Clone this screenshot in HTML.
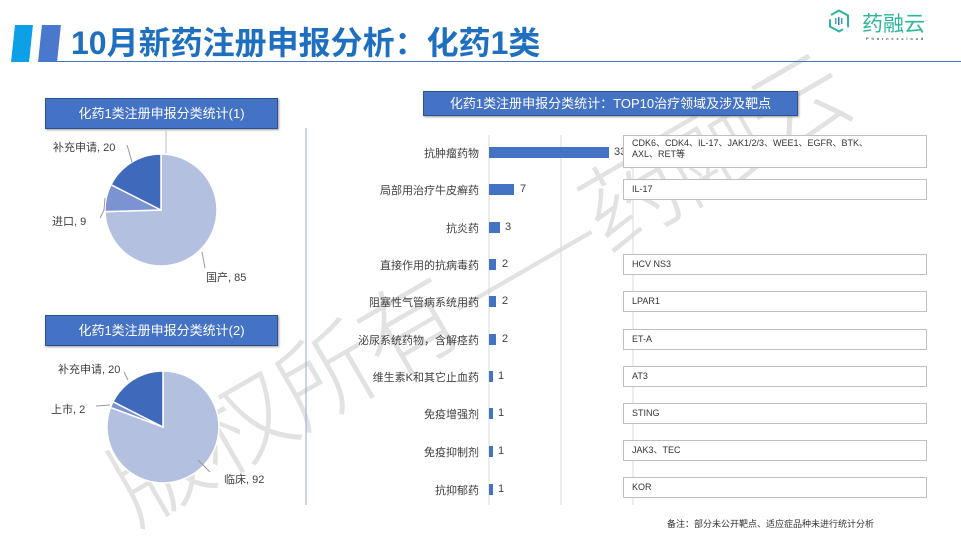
<!DOCTYPE html>
<html><head><meta charset="utf-8"><style>
*{margin:0;padding:0;box-sizing:border-box}
body{width:961px;height:538px;background:#fff;position:relative;overflow:hidden;font-family:"Liberation Sans","Noto Sans CJK SC",sans-serif;color:#404040}
.a{position:absolute}
.hdr{background:#4472c4;color:#fff;font-size:13px;text-align:center;border:1px solid #2f528f;box-shadow:1px 1px 2px #999}
.lbl{font-size:11px;color:#404040;white-space:nowrap}
.box{position:absolute;left:623px;width:304px;border:1px solid #bfbfbf;font-size:9px;padding:2px 8px;color:#333;line-height:11px;background:#fff}
.bar{position:absolute;left:489px;height:11px;background:#4472c4}
</style></head><body>
<div class="a" style="left:475px;top:282px;transform:translate(-50%,-50%) rotate(-30deg);font-size:98px;color:#e2e2e2;white-space:nowrap;font-family:'Noto Sans CJK SC',sans-serif;font-weight:300;letter-spacing:-2px">版权所有——药融云</div>
<div class="a" style="left:13px;top:25px;width:18px;height:37px;background:#0ea0e6;transform:skewX(-6deg)"></div>
<div class="a" style="left:40px;top:25px;width:19px;height:37px;background:#4a78cc;transform:skewX(-6deg)"></div>
<div class="a" style="left:71px;top:24px;font-size:32px;font-weight:bold;color:#1f6fc0;line-height:38px;white-space:nowrap">10月新药注册申报分析：化药1类</div>
<div class="a" style="left:56px;top:61px;width:905px;height:1px;background:#4472c4"></div>
<svg class="a" style="left:828px;top:9px" width="22" height="24" viewBox="0 0 22 24"><path d="M11 1.5 L20 6.5 L20 17.5 L11 22.5 L2 17.5 L2 6.5 Z" fill="none" stroke="#2bb59a" stroke-width="2" stroke-dasharray="22 5"/><rect x="7" y="9" width="1.5" height="6" fill="#2bb59a"/><rect x="10" y="8" width="1.5" height="8" fill="#4472c4"/><rect x="13" y="9" width="1.5" height="6" fill="#2bb59a"/></svg>
<div class="a" style="left:862px;top:11px;font-size:21px;color:#2bb59a;font-family:'Noto Sans CJK SC',sans-serif;line-height:25px">药融云</div>
<div class="a" style="left:866px;top:36px;font-size:4px;color:#555;letter-spacing:2.8px;font-weight:bold">Pharnexcloud</div>

<div class="a hdr" style="left:45px;top:98px;width:233px;height:31px;line-height:29px">化药1类注册申报分类统计(1)</div>
<div class="a hdr" style="left:45px;top:315px;width:233px;height:31px;line-height:29px">化药1类注册申报分类统计(2)</div>
<div class="a hdr" style="left:423px;top:91px;width:375px;height:25px;line-height:23px">化药1类注册申报分类统计：TOP10治疗领域及涉及靶点</div>

<svg class="a" style="left:0;top:0" width="961" height="538">
<line x1="166" y1="131" x2="166" y2="160" stroke="#bfbfbf"/>
<line x1="306" y1="128" x2="306" y2="505" stroke="#8faadc"/>
<line x1="489" y1="135" x2="489" y2="505" stroke="#d9d9d9"/>
<line x1="561" y1="135" x2="561" y2="505" stroke="#d9d9d9"/>
<line x1="633" y1="135" x2="633" y2="505" stroke="#d9d9d9"/>
<g stroke="#fff" stroke-width="1.5">
<path d="M161 210 L161 154 A56 56 0 1 1 105 211.6 Z" fill="#b4c0e0"/>
<path d="M161 210 L105 211.6 A56 56 0 0 1 111 184.7 Z" fill="#7b93d0"/>
<path d="M161 210 L111 184.7 A56 56 0 0 1 161 154 Z" fill="#3f6abb"/>
<path d="M163 427 L163 371 A56 56 0 1 1 110.5 407.4 Z" fill="#b4c0e0"/>
<path d="M163 427 L110.5 407.4 A56 56 0 0 1 113 401.7 Z" fill="#7b93d0"/>
<path d="M163 427 L113 401.7 A56 56 0 0 1 163 371 Z" fill="#3f6abb"/>
</g>
<g stroke="#999" fill="none">
<path d="M127 145 L132 162"/><path d="M100 218 L104 210 L105 198"/><path d="M202 252 L205 268"/>
<path d="M124 372 L128 380"/><path d="M96 406 L110 405"/><path d="M198 460 L210 472"/>
</g>
</svg>
<div class="a lbl" style="left:53px;top:139px">补充申请, 20</div>
<div class="a lbl" style="left:52px;top:213px">进口, 9</div>
<div class="a lbl" style="left:206px;top:269px">国产, 85</div>
<div class="a lbl" style="left:58px;top:361px">补充申请, 20</div>
<div class="a lbl" style="left:51px;top:401px">上市, 2</div>
<div class="a lbl" style="left:224px;top:471px">临床, 92</div>

<div class="a lbl" style="right:482px;top:145px">抗肿瘤药物</div>
<div class="a lbl" style="right:482px;top:182px">局部用治疗牛皮癣药</div>
<div class="a lbl" style="right:482px;top:220px">抗炎药</div>
<div class="a lbl" style="right:482px;top:257px">直接作用的抗病毒药</div>
<div class="a lbl" style="right:482px;top:294px">阻塞性气管病系统用药</div>
<div class="a lbl" style="right:482px;top:332px">泌尿系统药物，含解痉药</div>
<div class="a lbl" style="right:482px;top:369px">维生素K和其它止血药</div>
<div class="a lbl" style="right:482px;top:406px">免疫增强剂</div>
<div class="a lbl" style="right:482px;top:444px">免疫抑制剂</div>
<div class="a lbl" style="right:482px;top:482px">抗抑郁药</div>

<div class="bar" style="top:147px;width:120px"></div><div class="a lbl" style="left:614px;top:146px">33</div>
<div class="bar" style="top:184px;width:25px"></div><div class="a lbl" style="left:520px;top:183px">7</div>
<div class="bar" style="top:222px;width:11px"></div><div class="a lbl" style="left:505px;top:221px">3</div>
<div class="bar" style="top:259px;width:7px"></div><div class="a lbl" style="left:502px;top:258px">2</div>
<div class="bar" style="top:296px;width:7px"></div><div class="a lbl" style="left:502px;top:295px">2</div>
<div class="bar" style="top:334px;width:7px"></div><div class="a lbl" style="left:502px;top:333px">2</div>
<div class="bar" style="top:371px;width:4px"></div><div class="a lbl" style="left:498px;top:370px">1</div>
<div class="bar" style="top:408px;width:4px"></div><div class="a lbl" style="left:498px;top:407px">1</div>
<div class="bar" style="top:446px;width:4px"></div><div class="a lbl" style="left:498px;top:445px">1</div>
<div class="bar" style="top:484px;width:4px"></div><div class="a lbl" style="left:498px;top:483px">1</div>

<div class="box" style="top:135px;height:33px">CDK6、CDK4、IL-17、JAK1/2/3、WEE1、EGFR、BTK、<br>AXL、RET等</div>
<div class="box" style="top:179px;height:21px;line-height:15px">IL-17</div>
<div class="box" style="top:254px;height:21px;line-height:15px">HCV NS3</div>
<div class="box" style="top:291px;height:21px;line-height:15px">LPAR1</div>
<div class="box" style="top:329px;height:21px;line-height:15px">ET-A</div>
<div class="box" style="top:366px;height:21px;line-height:15px">AT3</div>
<div class="box" style="top:403px;height:21px;line-height:15px">STING</div>
<div class="box" style="top:440px;height:21px;line-height:15px">JAK3、TEC</div>
<div class="box" style="top:477px;height:21px;line-height:15px">KOR</div>
<div class="a" style="left:667px;top:517px;font-size:9px;color:#333">备注：部分未公开靶点、适应症品种未进行统计分析</div>
</body></html>
